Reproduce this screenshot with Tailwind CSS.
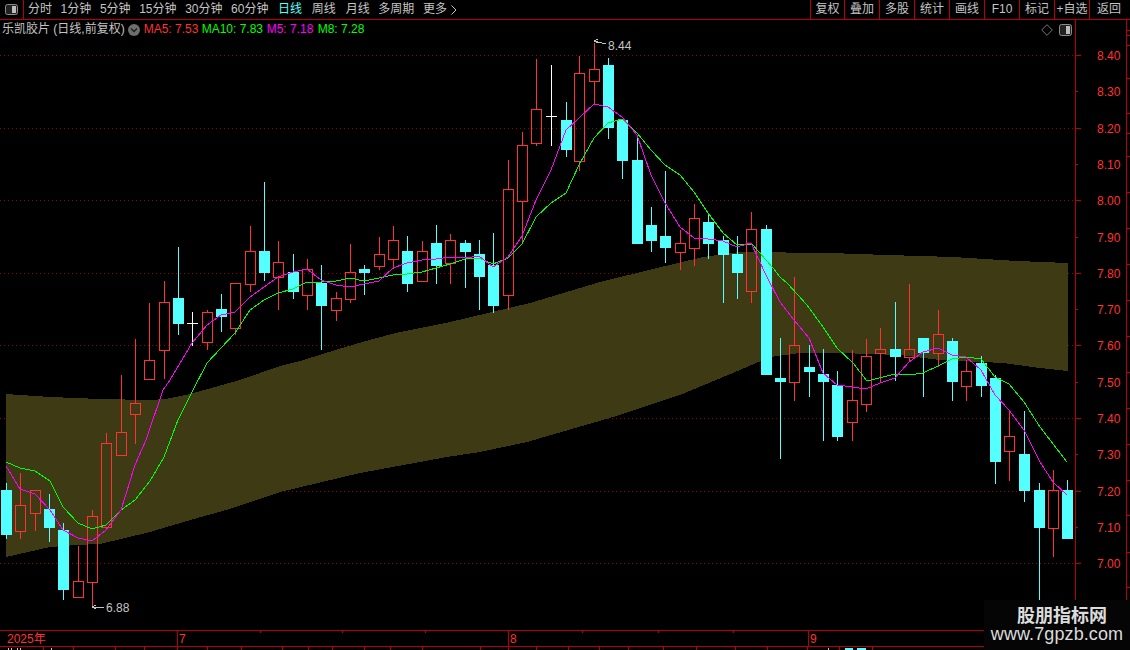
<!DOCTYPE html>
<html lang="zh">
<head>
    <meta charset="UTF-8">
    <title>乐凯胶片 日线</title>
    <script src="https://cdn.jsdelivr.net/npm/@tailwindcss/browser@4"></script>
</head>
<body class="bg-black w-[1130px] h-[650px] overflow-hidden font-['Liberation_Sans','Noto_Sans_CJK_SC',sans-serif] text-[12px] text-[#c4c4c4]">
    <!-- Top toolbar -->
    <div class="flex h-[20px] border-b border-[#b80000] leading-[19px]">
        <div class="w-[24px] border-r border-[#b80000] flex items-center justify-center">
            <svg width="13" height="11" viewBox="0 0 13 11"><rect x="0.5" y="0.5" width="12" height="10" rx="2" fill="#222" stroke="#8c8c8c"/><rect x="7" y="2" width="4" height="7" fill="#bdbdbd"/></svg>
        </div>
        <div class="flex gap-[8.6px] pl-[4px]">
            <span>分时</span>
            <span>1分钟</span>
            <span>5分钟</span>
            <span>15分钟</span>
            <span>30分钟</span>
            <span>60分钟</span>
            <span class="ml-[1px] text-[#54ffff]">日线</span>
            <span class="ml-[1px]">周线</span>
            <span class="ml-[1.5px]">月线</span>
            <span>多周期</span>
            <span class="flex items-center gap-[4px]">更多
                <svg width="6" height="10" viewBox="0 0 6 10"><path d="M0.5 0.5 L5 5 L0.5 9.5" fill="none" stroke="#c4c4c4"/></svg>
            </span>
        </div>
        <div class="flex ml-auto">
            <span class="w-[34px] text-center border-l border-[#b80000]">复权</span>
            <span class="w-[35px] text-center border-l border-[#b80000]">叠加</span>
            <span class="w-[35px] text-center border-l border-[#b80000]">多股</span>
            <span class="w-[35px] text-center border-l border-[#b80000]">统计</span>
            <span class="w-[35px] text-center border-l border-[#b80000]">画线</span>
            <span class="w-[35px] text-center border-l border-[#b80000]">F10</span>
            <span class="w-[35px] text-center border-l border-[#b80000]">标记</span>
            <span class="w-[35px] text-center border-l border-[#b80000]">+自选</span>
            <span class="w-[41px] pl-[7px] border-l border-[#b80000]">返回</span>
        </div>
    </div>

    <!-- Chart -->
    <div class="relative h-[610px]">
        <svg id="chart" class="block" width="1130" height="610" viewBox="0 20 1130 610"></svg>

        <!-- Legend sits over the chart -->
        <div class="absolute left-[2px] top-0 flex items-center h-[19px] leading-[19px]">
            <span>乐凯胶片 (日线,前复权)</span>
            <svg class="ml-[3px]" width="12" height="12" viewBox="0 0 12 12"><circle cx="6" cy="6" r="6" fill="#6e6e6e"/><path d="M3 4.5 L6 7.5 L9 4.5" fill="none" stroke="#1c1c1c" stroke-width="1.3"/></svg>
            <span class="ml-[4px] text-[#ff3232]">MA5: 7.53</span>
            <span class="ml-[3.3px] text-[#00ff00]">MA10: 7.83</span>
            <span class="ml-[3.6px] text-[#ff00ff]">M5: 7.18</span>
            <span class="ml-[4.3px] text-[#00ff00]">M8: 7.28</span>
        </div>
        <div class="absolute left-[1041px] top-[4px] flex items-center gap-[6px]">
            <svg width="12" height="12" viewBox="0 0 12 12"><path d="M6 0.7 L11.3 6 L6 11.3 L0.7 6 Z" fill="none" stroke="#777"/></svg>
            <svg width="13" height="12" viewBox="0 0 13 12"><rect x="0.5" y="0.5" width="12" height="11" rx="2" fill="#222" stroke="#8c8c8c"/><rect x="7" y="2" width="4" height="8" fill="#bdbdbd"/></svg>
        </div>
    </div>

    <!-- Time axis -->
    <div class="relative flex h-[17px] border-y border-[#b80000] leading-[16px] text-[#ff3232]">
        <div class="w-[177px] pl-[7px]">2025年</div>
        <div class="w-[331px] pl-[1px] border-l border-[#b80000]">7</div>
        <div class="w-[300px] pl-[1px] border-l border-[#b80000]">8</div>
        <div class="flex-1 pl-[1px] border-l border-[#b80000]">9</div>
        <i class="absolute left-[260px] top-0 w-px h-[2px] bg-[#b80000]"></i>
        <i class="absolute left-[342px] top-0 w-px h-[2px] bg-[#b80000]"></i>
        <i class="absolute left-[425px] top-0 w-px h-[2px] bg-[#b80000]"></i>
        <i class="absolute left-[582px] top-0 w-px h-[2px] bg-[#b80000]"></i>
        <i class="absolute left-[658px] top-0 w-px h-[2px] bg-[#b80000]"></i>
        <i class="absolute left-[733px] top-0 w-px h-[2px] bg-[#b80000]"></i>
    </div>
    <svg id="strip" class="block" width="1130" height="3"></svg>

    <!-- Watermark -->
    <div class="absolute left-[984px] top-[600px] w-[146px] h-[50px] bg-[#050505] flex flex-col items-center text-[#dcdcdc]">
        <div class="text-[18px] font-bold leading-[20px] mt-[4px] pl-[10px] font-['Noto_Sans_CJK_SC',sans-serif]">股朋指标网</div>
        <div class="text-[18px] leading-[21px] tracking-[0.1px]">www.7gpzb.com</div>
    </div>

    <script>
        const RED = '#ff3232', CYAN = '#54ffff', WHITE = '#ffffff', LINE = '#b80000', GRID = '#980000';

        // [x, wick top, wick bottom, body top, body bottom, type] in screen pixels
        const candles = [
            [6,483,538,490,534,'c'],[20,473,538,505,531,'r'],[35,490,530,490,513,'r'],[49,494,541,509,527,'c'],
            [63,523,599,530,589,'c'],[78,546,597,581,597,'r'],[92,510,607,516,582,'r'],[106,433,527,443,527,'r'],
            [121,375,455,432,455,'r'],[135,339,443,403,414,'r'],[149,303,379,360,379,'r'],[164,281,378,302,350,'r'],
            [178,247,334,298,323,'c'],[192,312,345,323,323,'w'],[207,310,349,312,342,'r'],[221,294,331,309,316,'c'],
            [235,283,334,283,328,'r'],[250,226,291,251,284,'r'],[264,182,280,251,272,'c'],[278,241,309,262,277,'r'],
            [293,254,298,272,291,'c'],[307,259,309,269,295,'r'],[321,265,349,283,305,'c'],[336,292,320,298,310,'r'],
            [350,244,302,272,299,'r'],[364,265,294,269,272,'c'],[379,237,269,254,266,'r'],[393,226,268,240,259,'r'],
            [407,236,291,251,283,'c'],[422,241,281,251,281,'r'],[436,225,283,243,265,'c'],[450,234,283,240,263,'r'],
            [465,240,287,243,251,'c'],[479,240,309,254,276,'c'],[493,233,312,265,305,'c'],[508,160,309,189,295,'r'],
            [522,132,243,145,201,'r'],[536,59,145,109,143,'r'],[551,65,145,116,116,'w'],[566,102,156,120,149,'c'],
            [579,56,170,73,161,'r'],[594,43,104,69,81,'r'],[608,58,138,65,127,'c'],[622,119,178,120,160,'c'],
            [637,138,243,160,243,'c'],[651,207,251,225,240,'c'],[665,171,262,236,247,'c'],[680,230,269,243,252,'r'],
            [694,204,265,218,248,'r'],[708,214,258,222,243,'c'],[723,236,302,240,254,'c'],[737,236,298,254,272,'c'],
            [751,212,302,229,291,'r'],[766,225,374,229,374,'c'],[780,338,458,378,381,'c'],[794,277,400,345,382,'r'],
            [809,345,396,367,371,'c'],[823,349,440,374,381,'c'],[837,371,440,385,436,'c'],[852,350,440,400,422,'r'],
            [866,339,411,356,404,'r'],[880,328,381,349,353,'r'],[895,302,380,349,356,'c'],[909,284,360,349,357,'r'],
            [923,338,396,338,352,'c'],[938,310,366,334,353,'r'],[952,338,400,341,381,'c'],[966,360,400,371,386,'r'],
            [981,356,396,363,385,'c'],[995,375,483,378,461,'c'],[1009,412,480,436,451,'r'],[1024,411,501,454,490,'c'],
            [1039,483,600,490,527,'c'],[1053,470,556,490,528,'r'],[1067,480,538,490,538,'c']
        ];

        const m5 = [[6,466],[20,489],[35,494],[50,510],[63,530],[78,538],[92,541],[106,530],[121,510],[135,465],[146,440],[163,390],[170,380],[192,343],[207,325],[221,315],[235,312],[250,297],[264,287],[278,277],[293,272],[307,269],[321,280],[336,285],[350,287],[364,284],[379,281],[393,268],[407,263],[422,260],[436,259],[450,257],[465,258],[479,256],[493,267],[508,257],[522,236],[536,200],[551,170],[566,130],[579,118],[594,104],[608,107],[622,117],[637,135],[651,175],[665,203],[680,227],[694,238],[708,239],[723,241],[737,247],[751,243],[766,275],[780,302],[794,320],[809,338],[823,373],[837,385],[852,387],[866,389],[880,383],[895,378],[909,362],[923,352],[938,348],[952,355],[966,357],[981,370],[995,395],[1009,410],[1024,430],[1040,462],[1053,482],[1067,495]];

        const m8 = [[6,462],[20,468],[35,471],[50,481],[63,507],[78,523],[92,529],[106,525],[121,510],[135,500],[150,481],[164,457],[178,420],[192,392],[207,363],[221,348],[235,333],[250,310],[264,300],[278,293],[293,289],[307,282],[321,282],[336,281],[350,278],[364,281],[379,278],[393,275],[407,274],[422,272],[436,268],[450,264],[465,259],[479,258],[493,264],[508,258],[522,244],[536,217],[551,203],[566,193],[579,165],[594,138],[608,123],[622,119],[637,133],[651,150],[665,165],[680,175],[694,192],[708,213],[723,233],[737,245],[752,244],[773,268],[780,277],[788,284],[807,305],[823,327],[837,348],[853,363],[867,381],[895,374],[910,375],[923,373],[938,366],[952,359],[967,357],[981,359],[995,377],[1009,384],[1024,402],[1040,427],[1067,462]];

        const bandTop = [[6,394],[50,397],[100,399],[150,400],[165,399],[190,394],[240,380],[280,366],[300,361],[342,348],[373,339],[400,332],[450,322],[530,303],[600,282],[653,269],[703,257],[740,252],[830,253],[887,255],[953,257],[1017,261],[1068,263]];
        const bandBottom = [[6,557],[50,547],[76,545],[100,544],[150,532],[187,521],[233,508],[280,492],[360,473],[447,457],[480,452],[527,442],[613,417],[680,395],[740,370],[770,357],[800,353],[840,353],[900,355],[940,360],[1003,363],[1040,368],[1068,371]];

        const pts = a => a.map(p => p.join(',')).join(' ');
        const rect = (x, y, w, h, c) => `<rect x="${x}" y="${y}" width="${w}" height="${h}" fill="${c}"/>`;

        let out = '<g shape-rendering="crispEdges">';

        // Price grid and ticks: 0.1 = 36.3px, 8.40 at y=55
        for (let i = 0; i <= 14; i++) {
            const y = Math.round(55 + i * 36.3);
            const major = i % 2 === 0;
            if (major) {
                for (let x = 0; x < 1075; x += 4) out += rect(x, y, 1, 1, GRID);
            }
            out += rect(1076, y, major ? 5 : 2, 1, LINE);
        }

        out += `<polygon points="${pts(bandTop)} ${pts([...bandBottom].reverse())}" fill="#3d3a14"/>`;

        // Candles
        for (const [x, wt, wb, bt, bb, t] of candles) {
            if (t === 'w') {
                out += rect(x, wt, 1, wb - wt + 1, WHITE) + rect(x - 5, bt, 11, 1, WHITE);
            } else if (t === 'c') {
                out += rect(x, wt, 1, wb - wt + 1, CYAN) + rect(x - 5, bt, 11, bb - bt + 1, CYAN);
            } else {
                if (wt < bt) out += rect(x, wt, 1, bt - wt, RED);
                if (wb > bb) out += rect(x, bb + 1, 1, wb - bb, RED);
                out += `<rect x="${x - 4.5}" y="${bt + 0.5}" width="10" height="${bb - bt}" fill="none" stroke="${RED}"/>`;
            }
        }

        out += `<polyline points="${pts(m8)}" fill="none" stroke="#00ff00"/>`;
        out += `<polyline points="${pts(m5)}" fill="none" stroke="#ff00ff"/>`;

        // Axis lines
        out += rect(1075, 20, 1, 610, LINE) + rect(1126, 20, 1, 610, LINE);
        for (const y of [30, 35, 45, 78, 113, 133, 156, 192, 228, 264, 300, 336, 372, 408, 444, 480, 515, 552, 587]) {
            out += rect(1127, y, 3, 1, LINE);
        }

        // High / low arrows
        out += `<path d="M594 41 L606 44 M594 41 L598 39 M594 41 L598 43 M92 607 L104 607 M92 607 L96 605 M92 607 L96 609" stroke="#c4c4c4" fill="none"/>`;
        out += '</g>';

        for (let i = 0; i <= 14; i++) {
            const y = Math.round(55 + i * 36.3);
            out += `<text x="1097" y="${y + 5}" font-size="12" fill="${RED}">${(8.4 - i / 10).toFixed(2)}</text>`;
        }
        out += `<text x="608" y="50" font-size="12" fill="#c4c4c4">8.44</text>`;
        out += `<text x="106" y="612" font-size="12" fill="#c4c4c4">6.88</text>`;
        document.getElementById('chart').innerHTML = out;

        // Tops of the next panel's cells, cut off by the window edge
        let strip = '';
        for (const x of [43,73,115,144,177,207,241,282,308,332,364,390,422,480,508,536,568,599,628,663,696,735,767,807,839,872]) {
            strip += rect(x, 0, 1, 3, LINE);
        }
        for (const x of [8,11,17,20,51,828]) strip += rect(x, 1, 1, 2, '#c4c4c4');
        strip += rect(845, 1, 8, 2, CYAN) + rect(857, 1, 9, 2, CYAN);
        document.getElementById('strip').innerHTML = strip;
    </script>
</body>
</html>
